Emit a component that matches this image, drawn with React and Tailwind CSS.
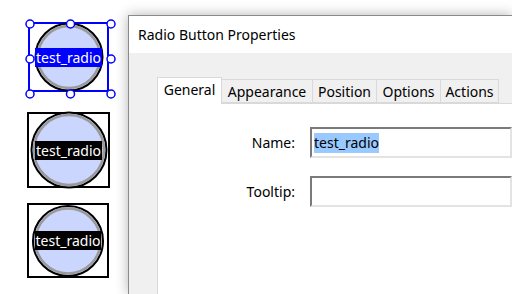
import React from "react";

const RadioWidget = ({ selected, boxClass, size, bandClass }) => {
  const r = size / 2;
  return (
    <div className={`relative flex items-center justify-center ${boxClass}`}>
      <svg className="absolute left-1/2 top-1/2 -translate-x-1/2 -translate-y-1/2" width={size} height={size} viewBox={`0 0 ${size} ${size}`}>
        <circle cx={r} cy={r} r={r - 1.5} fill="#cbd6ff" stroke="#000" strokeWidth="2" />
        <circle cx={r} cy={r} r={r - 4} fill="none" stroke="#9a9a9a" strokeWidth="2.5" />
      </svg>
      <span className={`relative z-10 px-[1px] text-white text-[14px] leading-[19px] ${bandClass}`}>test_radio</span>
      {selected && (
        <svg className="absolute -left-[5px] -top-[5px] z-20 overflow-visible" width="91" height="80">
          {[
            [5, 5], [45.5, 5], [86, 5],
            [5, 40], [86, 40],
            [5, 75], [45.5, 75], [86, 75],
          ].map(([x, y], i) => (
            <circle key={i} cx={x} cy={y} r="4" fill="#fff" stroke="#0000ff" strokeWidth="1.5" />
          ))}
        </svg>
      )}
    </div>
  );
};

const tabs = ["General", "Appearance", "Position", "Options", "Actions"];
const tabWidths = ["w-[65px]", "w-[91px]", "w-[64px]", "w-[64px]", "w-[58px]"];

export default function App() {
  return (
    <div className="flex w-[512px] h-[294px] overflow-hidden bg-white font-['Noto_Sans',sans-serif] text-[#1a1a1a]">
      {/* canvas with widgets */}
      <div className="flex flex-col items-start w-[128px] shrink-0 pt-[22px] pl-[28px]">
        <RadioWidget selected size={70} boxClass="w-[81px] h-[70px] border-2 border-[#0000ff]" bandClass="bg-[#0000ff]" />
        <div className="mt-[20px] -ml-[1px]">
          <RadioWidget size={78} boxClass="w-[83px] h-[76px] border-2 border-black" bandClass="bg-black" />
        </div>
        <div className="mt-[15px] -ml-[1px]">
          <RadioWidget size={73} boxClass="w-[82px] h-[75px] border-2 border-black" bandClass="bg-black" />
        </div>
      </div>

      {/* dialog */}
      <div className="mt-[15px] flex-1 flex flex-col border-t border-l border-[#8a8a8a] bg-[#f0f0f0] shadow-[0_0_12px_rgba(0,0,0,0.3)]">
        <div className="h-[37px] shrink-0 bg-white pl-[9px] flex items-center text-[14px] text-black">
          Radio Button Properties
        </div>
        <div className="flex flex-col pl-[28px] pt-[23px] flex-1">
          <div className="flex items-end h-[27px]">
            {tabs.map((t, i) =>
              i === 0 ? (
                <div key={t} className={`${tabWidths[i]} h-[27px] -mb-px z-10 bg-white border border-b-0 border-[#d9d9d9] flex items-center justify-center text-[14px] text-black pb-[3px]`}>
                  {t}
                </div>
              ) : (
                <div key={t} className={`${tabWidths[i]} h-[24px] border border-l-0 border-[#d9d9d9] flex items-center justify-center text-[14px] text-black`}>
                  {t}
                </div>
              )
            )}
          </div>
          <div className="flex-1 bg-white border-t border-l border-[#d9d9d9] pt-[23px]">
            <div className="grid grid-cols-[137px_1fr] gap-x-[15px] gap-y-[18px] items-center">
              <div className="text-right text-[14px] text-black">Name:</div>
              <div className="h-[31px] border-2 border-t-[#7a7a7a] border-l-[#7a7a7a] border-r-[#e3e3e3] border-b-[#e3e3e3] flex items-center pl-[2px]">
                <span className="bg-[#99c9ff] text-[14px] leading-[20px] text-black">test_radio</span>
              </div>
              <div className="text-right text-[14px] text-black">Tooltip:</div>
              <div className="h-[31px] border-2 border-t-[#7a7a7a] border-l-[#7a7a7a] border-r-[#e3e3e3] border-b-[#e3e3e3]" />
            </div>
          </div>
        </div>
      </div>
    </div>
  );
}
